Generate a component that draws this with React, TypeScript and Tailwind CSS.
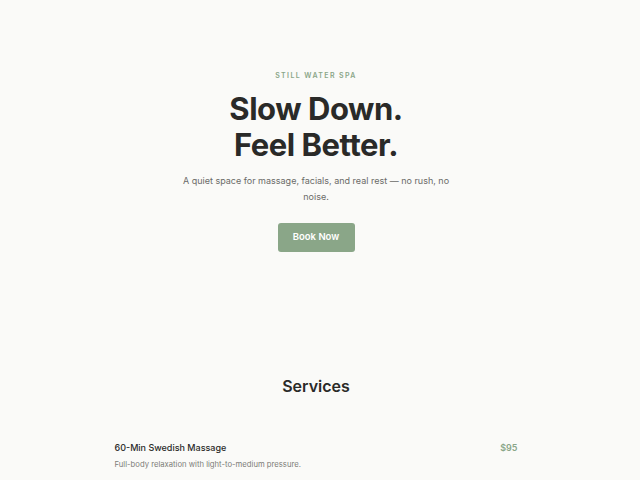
import React from 'react';

const services = [
  { name: '60-Min Swedish Massage', desc: 'Full-body relaxation with light-to-medium pressure.', price: '$95' },
  { name: 'Signature Facial', desc: 'Cleanse, exfoliate, and hydrate for a calm glow.', price: '$85' },
];

const App: React.FC = () => {
  return (
    <div className="min-h-screen bg-[#fafaf8] pr-[8px] text-[#2a2a28]" style={{ fontFamily: 'Inter, "Noto Sans", sans-serif' }}>
      <section className="flex flex-col items-center pt-[71px] pb-[82px] text-center">
        <p className="text-[7px] font-semibold tracking-[0.2em] text-[#8aa688]">STILL WATER SPA</p>
        <h1 className="mt-[9px] text-[31px] font-bold leading-[36px] tracking-[-0.015em] text-[#2a2a28]">
          Slow Down.
          <br />
          Feel Better.
        </h1>
        <p className="mt-[10px] w-[272px] text-[9px] leading-[16px] text-[#6b6b68]">
          A quiet space for massage, facials, and real rest — no rush, no noise.
        </p>
        <button className="mt-[18px] h-[29px] w-[77px] rounded-[3px] bg-[#8aa688] text-[9.5px] font-semibold text-white">
          Book Now
        </button>
      </section>

      <section className="flex flex-col items-center pt-[40px]">
        <h2 className="text-[16px] font-semibold leading-[24px] text-[#2a2a28]">Services</h2>
        <div className="mt-[43px] flex w-[403px] flex-col gap-[24px]">
          {services.map((s) => (
            <div key={s.name} className="flex items-start justify-between">
              <div>
                <p className="text-[9px] font-medium leading-[14px] text-[#2a2a28]">{s.name}</p>
                <p className="mt-[4px] text-[7.7px] leading-[12px] text-[#7d7d79]">{s.desc}</p>
              </div>
              <p className="text-[9px] font-semibold leading-[14px] text-[#8aa688]">{s.price}</p>
            </div>
          ))}
        </div>
      </section>
    </div>
  );
};

export default App;
